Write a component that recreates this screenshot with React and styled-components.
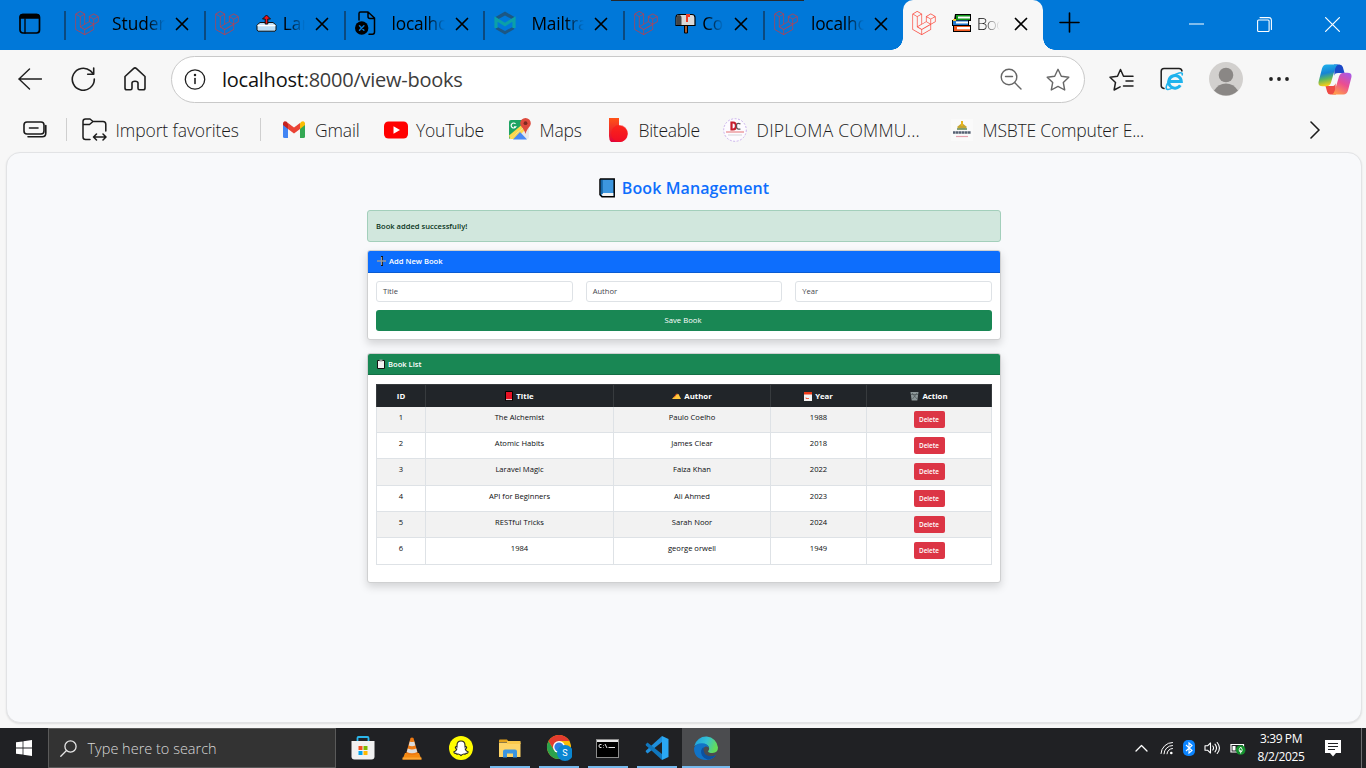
import React from "react";
import styled, { createGlobalStyle, css } from "styled-components";
import { SiLaravel } from "react-icons/si";

const Global = createGlobalStyle`
  * { box-sizing: border-box; }
  body { margin: 0; background: #f7f7f7; font-family: "Open Sans", "Noto Sans", sans-serif; overflow: hidden; }
  svg { display: block; flex: none; }
`;

const Screen = styled.div`
  width: 1366px;
  height: 768px;
  display: flex;
  flex-direction: column;
  background: #f7f7f7;
`;

/* ---------- Tab strip ---------- */
const TabStrip = styled.header`
  position: relative;
  height: 50px;
  flex: none;
  display: flex;
  background: #0078d9;
`;
const DragHint = styled.div`
  position: absolute;
  top: 0;
  left: 611px;
  width: 193px;
  height: 1px;
  background: #26282c;
`;
const Workspace = styled.div`
  width: 64px;
  padding: 13px 0 0 19px;
`;
const Tab = styled.div`
  position: relative;
  flex: none;
  width: 139.8px;
  height: 50px;
  display: flex;
  align-items: flex-start;
  padding-top: 11px;
  ${(p) =>
    p.$active
      ? css`
          background: #f7f7f7;
          border-radius: 10px 10px 0 0;
          &::before,
          &::after {
            content: "";
            position: absolute;
            bottom: 0;
            width: 12px;
            height: 12px;
          }
          &::before {
            left: -12px;
            background: radial-gradient(circle at 0 0, transparent 11.5px, #f7f7f7 12px);
          }
          &::after {
            right: -12px;
            background: radial-gradient(circle at 100% 0, transparent 11.5px, #f7f7f7 12px);
          }
        `
      : ""}
`;
const TabRule = styled.span`
  width: 2px;
  height: 29px;
  background: ${(p) => (p.$hidden ? "transparent" : "#0b4a80")};
`;
const Favicon = styled.span`
  width: 24px;
  height: 24px;
  margin-left: ${(p) => (p.$active ? 7 : 9)}px;
  color: ${(p) => (p.$active ? "#fb5348" : "#b8414f")};
`;
const TabTitle = styled.span`
  display: flex;
  align-items: center;
  width: 53px;
  height: 24px;
  margin-left: ${(p) => (p.$active ? 11 : 13)}px;
  padding-left: ${(p) => p.$indent || 0}px;
  overflow: hidden;
  white-space: nowrap;
  font-size: 17.3px;
  font-weight: ${(p) => (p.$active ? 300 : 400)};
  letter-spacing: ${(p) => p.$ls || 0}px;
  color: #000;
  mask-image: linear-gradient(90deg, #000 65%, transparent 100%);
  svg { margin-right: 6px; }
`;
const TabClose = styled.span`
  margin: 6px 0 0 ${(p) => (p.$active ? 14 : 10)}px;
`;
const NewTab = styled.div`
  margin: 12px 0 0 16px;
`;
const WindowButtons = styled.div`
  display: flex;
  align-items: center;
  gap: 53px;
  margin-left: auto;
  padding: 0 26px 2px 0;
`;

/* ---------- Toolbar ---------- */
const Toolbar = styled.div`
  height: 58px;
  flex: none;
  display: flex;
  align-items: center;
  padding-left: 18px;
  color: #1f1f1f;
`;
const NavButtons = styled.div`
  width: 153px;
  display: flex;
  gap: 28.5px;
  align-items: center;
`;
const AddressBar = styled.div`
  width: 914px;
  height: 47px;
  display: flex;
  align-items: center;
  padding: 0 14px 0 12px;
  border: 1px solid #c9c9c9;
  border-radius: 24px;
  background: #fff;
  svg + svg { margin-left: 24px; }
`;
const Url = styled.span`
  flex: 1;
  padding-left: 16px;
  font-size: 20px;
  letter-spacing: -0.24px;
  color: #3c3c3c;
  b { font-weight: 400; color: #111; }
`;
const ToolButtons = styled.div`
  display: flex;
  align-items: center;
  flex: 1;
  padding-left: 24px;
`;
const ToolSlot = styled.span`
  width: ${(p) => p.$w}px;
`;

/* ---------- Favourites bar ---------- */
const Favourites = styled.nav`
  height: 44px;
  flex: none;
  display: flex;
  align-items: center;
  padding: 0 0 1px 23px;
  color: #1b1b1b;
`;
const FavRule = styled.span`
  width: 1px;
  height: 23px;
  margin: 0 ${(p) => p.$after}px 0 ${(p) => p.$before}px;
  background: #cfcfcf;
`;
const Fav = styled.div`
  width: ${(p) => p.$w}px;
  display: flex;
  align-items: center;
  white-space: nowrap;
  font-size: 17.5px;
  font-weight: 300;
  letter-spacing: ${(p) => p.$ls || 0}px;
`;
const FavIcon = styled.span`
  width: ${(p) => p.$w || 32}px;
  flex: none;
`;

/* ---------- Web page ---------- */
const Viewport = styled.main`
  width: 1356px;
  height: 571px;
  flex: none;
  margin: 0 0 5px 6px;
  display: flex;
  flex-direction: column;
  align-items: center;
  padding-top: 24px;
  border: 1px solid #e2e3e5;
  border-radius: 14px;
  background: #f8f9fb;
  box-shadow: 0 1px 2px rgba(0, 0, 0, 0.1);
  font-size: 8px;
`;
const Heading = styled.h2`
  height: 22px;
  margin: 0 0 11px;
  display: flex;
  align-items: center;
  gap: 7px;
  font-size: 16px;
  line-height: 22px;
  font-weight: 600;
  letter-spacing: 0.09px;
  color: #0d6efd;
`;
const Column = styled.div`
  width: 634px;
  display: flex;
  flex-direction: column;
`;
const Alert = styled.div`
  height: 32px;
  padding-left: 8px;
  display: flex;
  align-items: center;
  border: 1px solid #a3cfbb;
  border-radius: 3px;
  background: #d1e7dd;
  color: #0a3622;
  font-weight: 600;
  font-size: 7.6px;
`;
const Card = styled.section`
  height: ${(p) => p.$h}px;
  margin-top: ${(p) => p.$mt}px;
  border: 1px solid #cfd0d1;
  border-radius: 3px;
  background: #fff;
  box-shadow: 0 4px 8px rgba(0, 0, 0, 0.15);
`;
const CardHeader = styled.div`
  height: ${(p) => p.$h}px;
  padding: 0 0 1px 9px;
  display: flex;
  align-items: center;
  gap: 3px;
  border-radius: 2px 2px 0 0;
  border-bottom: 1px solid rgba(0, 0, 0, 0.17);
  background: ${(p) => p.$bg};
  color: #fff;
  font-weight: 600;
  font-size: 7.6px;
`;
const Form = styled.div`
  padding: 8px;
  display: grid;
  grid-template-columns: repeat(3, 1fr);
  gap: 8px 13px;
`;
const Input = styled.div`
  height: 21px;
  padding: 0 0 1px 6px;
  display: flex;
  align-items: center;
  border: 1px solid #dee2e6;
  border-radius: 3px;
  color: #3f454b;
  font-size: 7.6px;
`;
const SaveButton = styled.div`
  grid-column: 1 / -1;
  height: 21px;
  padding: 0 2px 1px 0;
  display: flex;
  align-items: center;
  justify-content: center;
  border-radius: 3px;
  background: #198754;
  color: #fff;
  font-size: 7.7px;
`;
const Table = styled.div`
  margin: 9px 8px 0;
`;
const Row = styled.div`
  display: grid;
  grid-template-columns: 49px 188px 157px 96px 125px;
  height: ${(p) => p.$h}px;
  border-left: 1px solid #dee2e6;
  background: ${(p) => (p.$striped ? "#f2f2f2" : "#fff")};
`;
const HeadRow = styled(Row)`
  background: #212529;
  border: 1px solid #373b3e;
  border-width: 1px 0 0 1px;
`;
const HeadCell = styled.div`
  display: flex;
  align-items: center;
  justify-content: center;
  gap: 3px;
  border-right: 1px solid #373b3e;
  color: #fff;
  font-weight: 700;
  font-size: 7.8px;
`;
const Cell = styled.div`
  padding-top: 5px;
  border: solid #dee2e6;
  border-width: 0 1px 1px 0;
  text-align: center;
  line-height: 11px;
  font-size: 7.6px;
  color: #0b0d0f;
`;
const DeleteButton = styled.div`
  width: 31px;
  height: 17px;
  margin: -1px auto 0;
  border-radius: 2px;
  background: #dc3545;
  color: #fff;
  font-size: 6.4px;
  font-weight: 600;
  line-height: 17px;
`;

/* ---------- Taskbar ---------- */
const Taskbar = styled.footer`
  height: 40px;
  flex: none;
  display: flex;
  background: #202124;
  color: #fff;
`;
const Start = styled.div`
  width: 48px;
  padding: 12px 0 0 16px;
`;
const Search = styled.div`
  width: 288px;
  display: flex;
  align-items: center;
  gap: 11px;
  padding-left: 10.5px;
  border: 1px solid #5a5a5a;
  background: #333;
  color: #d8d8d8;
  font-size: 14.5px;
  font-weight: 300;
`;
const Apps = styled.div`
  display: flex;
  padding-left: 2px;
`;
const AppSlot = styled.div`
  width: ${(p) => (p.$active ? 48 : 49)}px;
  margin-left: ${(p) => (p.$active ? 1 : 0)}px;
  display: flex;
  align-items: center;
  justify-content: center;
  background: ${(p) =>
    p.$active
      ? "linear-gradient(#76b9ed, #76b9ed) center bottom / 100% 2px no-repeat #4b4c4f"
      : p.$running
        ? "linear-gradient(#76b9ed, #76b9ed) center bottom / 40px 2px no-repeat"
        : "none"};
`;
const Tray = styled.div`
  display: flex;
  align-items: center;
  margin-left: auto;
`;
const TraySlot = styled.span`
  width: ${(p) => p.$w}px;
`;
const Clock = styled.div`
  width: 70px;
  font-size: 12px;
  line-height: 18px;
  text-align: center;
  letter-spacing: -0.4px;
`;
const DesktopEdge = styled.span`
  width: 5px;
  height: 40px;
  border-left: 1px solid #6d6d70;
`;

/* ---------- Icons ---------- */
const line = (w = 1.5) => ({
  fill: "none",
  stroke: "currentColor",
  strokeWidth: w,
  strokeLinecap: "round",
  strokeLinejoin: "round",
});

const WorkspaceIcon = () => (
  <svg width="22" height="22" viewBox="0 0 22 22" {...line(1.7)}>
    <rect x="1" y="1.5" width="19.5" height="18.5" rx="3" />
    <path d="M1.4 5V3.5a2 2 0 0 1 2-2h14.5a2 2 0 0 1 2 2V5z" fill="#000" />
    <path d="M6 6v14" strokeWidth="1.3" />
  </svg>
);
const CloseIcon = () => (
  <svg width="14" height="14" viewBox="0 0 14 14" {...line(1.7)} color="#000">
    <path d="M1.5 1.5l11 11M12.5 1.5l-11 11" />
  </svg>
);
const BrokenPage = () => (
  <svg width="24" height="24" viewBox="0 0 24 24" color="#000" {...line(1.5)}>
    <path d="M4 9V2.500Q4 1 5.500 1H13l6.500 6v14Q19.500 23.200 17.500 23.200h-3.500M13 1v4.500Q13 7.500 15 7.500h4.500" />
    <circle cx="6.700" cy="17" r="6.700" fill="#000" stroke="none" />
    <path d="M4.500 14.800l4.400 4.400M8.900 14.800l-4.400 4.400" stroke="#0078d9" />
  </svg>
);
const Mailtrap = () => (
  <svg width="22" height="24" viewBox="0 0 22 24" fill="none">
    <path d="M1.500 6L11 .500 20.500 6 18.500 8.500 11 4.500 3.500 8.500z" fill="#1c5784" />
    <path d="M1.500 18L11 23.500 20.500 18 18.500 16 11 20 3.500 16z" fill="#1c5784" />
    <path d="M2 17V8L11 13.500 20 8v9" stroke="#0ba0a8" strokeWidth="3.200" />
  </svg>
);
const Outbox = () => (
  <svg width="21" height="18" viewBox="0 0 21 18">
    <path d="M1 11l3-2.500h13l3 2.500v5l-1 1.200H2L1 16z" fill="#b9dcf5" stroke="#111" strokeWidth="1" />
    <path d="M1.500 11.500h18" stroke="#fff" strokeWidth="1.500" />
    <path d="M10.500 1L6.500 5h2.700v5h2.600V5h2.700z" fill="#f0121c" stroke="#111" strokeWidth="1" />
  </svg>
);
const Mailbox = () => (
  <svg width="21" height="21" viewBox="0 0 21 21">
    <path d="M9.500 12h3v8h-3z" fill="#a75a2a" stroke="#000" />
    <path d="M1 12.500V4.500Q1 1.500 4 1.500h13q3 0 3 3v8z" fill="#d9d9d9" stroke="#000" strokeWidth="1.200" />
    <path d="M1.500 12V5q0-3 2.500-3t2.500 3v7z" fill="#444" />
    <path d="M11 1h4v3h-2v5h-2z" fill="#ef3c25" />
  </svg>
);
const Books = () => (
  <svg width="19" height="18" viewBox="0 0 19 18">
    <path d="M3 0h16v7h-2v4h2v7H1v-6H0V6h2z" fill="#000" />
    <path d="M4 1h14v5H4z" fill="#12961a" /><path d="M6 2.500h12v2H6z" fill="#fff" />
    <path d="M1 6.500h15v4.500H1z" fill="#2379cf" /><path d="M4 7.500h12v2H4z" fill="#fff" />
    <path d="M1 5h3v2H1z" fill="#f4c430" />
    <path d="M2 12h16v5H2z" fill="#f05a22" /><path d="M5 13h13v2.300H5z" fill="#fff" />
  </svg>
);
const BlueBook = () => (
  <svg width="16" height="20" viewBox="0 0 16 20">
    <path d="M1.500 1h13.700v17.800H3L1 16.800V1.500z" fill="#3d96de" stroke="#000" strokeWidth="1.500" />
    <path d="M2.500 15h11.800v3H3.500z" fill="#f2f2f2" /><path d="M1.800 2h2v14h-2z" fill="#1667a8" />
  </svg>
);
const RedBook = () => (
  <svg width="8" height="10" viewBox="0 0 8 10">
    <path d="M.5.500h7v9h-7z" fill="#e81224" stroke="#000" /><path d="M1 8.200h6v.9H1z" fill="#eee" />
  </svg>
);
const Plus = () => (
  <svg width="9" height="10" viewBox="0 0 9 10">
    <path d="M5 0v10" stroke="#15171a" strokeWidth="2" />
    <path d="M0 5h9M4.500 1v8" stroke="#9b9b9b" strokeWidth="1.300" />
  </svg>
);
const Clipboard = () => (
  <svg width="8" height="10" viewBox="0 0 8 10">
    <path d="M.5 1.500h7v8h-7z" fill="#f1f1f1" stroke="#111" /><path d="M2.500.500h3v2h-3z" fill="#999" />
  </svg>
);
const Writing = () => (
  <svg width="9" height="8" viewBox="0 0 9 8">
    <path d="M0 7l4-4.500 2.500-.5L9 7z" fill="#ffc83d" /><path d="M2 5.500l3-4" stroke="#e04a1f" strokeWidth="1" />
  </svg>
);
const Calendar = () => (
  <svg width="8" height="9" viewBox="0 0 8 9">
    <path d="M0 0h8v9H0z" fill="#f3f3f3" /><path d="M0 0h8v2.500H0z" fill="#f03a17" /><path d="M2 5.500v1h3" stroke="#f03a17" fill="none" strokeWidth=".8" />
  </svg>
);
const Bin = () => (
  <svg width="9" height="10" viewBox="0 0 9 10">
    <path d="M.5 1h8l-1.200 8.500H1.700z" fill="#8b9698" /><path d="M2 2l5 6M7 2L2.500 8M1 3.500h7" stroke="#4c5558" strokeWidth=".7" />
  </svg>
);

const Gmail = () => (
  <svg width="22" height="17" viewBox="0 0 22 17">
    <path d="M0 2v13.500Q0 17 1.500 17H5V7z" fill="#4285f4" />
    <path d="M22 2v13.500q0 1.500-1.500 1.500H17V7z" fill="#34a853" />
    <path d="M17 2.200V8l5-4V2.500C22 .3 20-.6 18.300.800z" fill="#fbbc04" />
    <path d="M0 2.500V4l5 4V2.200L3.700.800C2-.6 0 .3 0 2.500z" fill="#c5221f" />
    <path d="M5 2v6l6 4.500L17 8V2l-6 4.500z" fill="#ea4335" />
  </svg>
);
const YouTube = () => (
  <svg width="24" height="18" viewBox="0 0 24 18">
    <rect y=".5" width="24" height="17" rx="4.500" fill="#f00" /><path d="M9.500 5.300l6.500 3.700-6.500 3.700z" fill="#fff" />
  </svg>
);
const Maps = () => (
  <svg width="23" height="23" viewBox="0 0 23 23">
    <rect x="1" y="2" width="20" height="19" rx="2" fill="#e8e8e8" />
    <path d="M3 2h12v7L1 21V4q0-2 2-2z" fill="#1fa463" />
    <path d="M2 21L19 7l2 1L8 21z" fill="#ffd84b" />
    <path d="M5 21.500l7-7.500 7 7.500z" fill="#4a89f3" />
    <path d="M1 17.500L13 7.500l2 2L2 21z" fill="#ffd84b" />
    <path d="M7.500 5.800a2.500 2.500 0 1 0 .3 3H6" fill="none" stroke="#fff" strokeWidth="1.200" />
    <path d="M17.500 0a5.300 5.300 0 0 1 5.300 5.300c0 3.700-4 5-5.300 10.700-1.300-5.700-5.300-7-5.300-10.700A5.300 5.300 0 0 1 17.500 0z" fill="#dd4b3e" />
    <circle cx="17.500" cy="5.200" r="1.900" fill="#7d2a22" />
  </svg>
);
const Biteable = () => (
  <svg width="20" height="24" viewBox="0 0 20 24">
    <defs><linearGradient id="bite" x2="0" y2="1"><stop stopColor="#ff5317" /><stop offset="1" stopColor="#e0043c" /></linearGradient></defs>
    <path d="M0 0h10v7.500a8.300 8.300 0 1 1-1 16.500H2Q0 22 0 18z" fill="url(#bite)" />
    <circle cx="10.500" cy="15.500" r="8.400" fill="#ff1414" opacity=".55" />
  </svg>
);
const Diploma = () => (
  <svg width="24" height="24" viewBox="0 0 24 24">
    <circle cx="12" cy="12" r="11.300" fill="#fdfbff" stroke="#cbb3ec" strokeDasharray="2 1.500" />
    <path d="M8.500 4.500H10q3 0 3 3.500t-3 3.500H8.500z" fill="none" stroke="#c81e2c" strokeWidth="2.200" />
    <path d="M17.500 6q-4-2-4 2t4 3" fill="none" stroke="#555" strokeWidth="1.200" />
    <path d="M3 14h18" stroke="#eb9ea2" strokeWidth="1.500" /><path d="M5 17h14" stroke="#d5d5da" />
  </svg>
);
const Msbte = () => (
  <svg width="22" height="22" viewBox="0 0 22 22">
    <path d="M0 0h22v22H0z" fill="#fafafa" />
    <path d="M6 8l5-4 5 4-2 2H8z" fill="#c5a632" /><path d="M11 2v5" stroke="#e8b51c" strokeWidth="2" />
    <path d="M6 10h10" stroke="#7a9a70" strokeWidth="1.800" />
    <path d="M2 13.500h18" stroke="#566173" strokeWidth="2.600" strokeDasharray="2.500 .4" />
    <path d="M5 17.500h12" stroke="#e5a0ae" strokeWidth="1.200" />
  </svg>
);
const star = "M12 1.300l3.300 6.900 7.500 1-5.500 5.300 1.400 7.500L12 18.400 5.300 22l1.400-7.500L1.200 9.200l7.500-1z";

const Tabs = [
  { icon: "laravel", title: "Studer", ls: 0 },
  { icon: "laravel", title: "Lar", glyph: <Outbox />, ls: 0 },
  { icon: <BrokenPage />, title: "localho", ls: -0.2 },
  { icon: <Mailtrap />, title: "Mailtra", ls: -0.1 },
  { icon: "laravel", title: "Co", glyph: <Mailbox />, ls: -0.3 },
  { icon: "laravel", title: "localho", ls: -0.2 },
  { icon: "laravel", title: "Boo", glyph: <Books />, active: true, ls: -0.9 },
];

const books = [
  ["1", "The Alchemist", "Paulo Coelho", "1988", 26],
  ["2", "Atomic Habits", "James Clear", "2018", 26],
  ["3", "Laravel Magic", "Faiza Khan", "2022", 27],
  ["4", "API for Beginners", "Ali Ahmed", "2023", 26],
  ["5", "RESTful Tricks", "Sarah Noor", "2024", 26],
  ["6", "1984", "george orwell", "1949", 27],
];

function BrowserTabs() {
  return (
    <TabStrip>
      <Workspace><WorkspaceIcon /></Workspace>
      {Tabs.map((t, i) => (
        <Tab key={i} $active={t.active}>
          <TabRule $hidden={t.active} />
          <Favicon $active={t.active}>{t.icon === "laravel" ? <SiLaravel size={24} /> : t.icon}</Favicon>
          <TabTitle $active={t.active} $ls={t.ls} $indent={t.glyph ? (t.active ? 5 : 4) : 0}>{t.glyph}{t.title}</TabTitle>
          <TabClose $active={t.active}><CloseIcon /></TabClose>
        </Tab>
      ))}
      <NewTab>
        <svg width="21" height="21" viewBox="0 0 21 21" {...line(1.6)} color="#000"><path d="M10.500 1v19M1 10.500h19" /></svg>
      </NewTab>
      <WindowButtons>
        <svg width="15" height="15" viewBox="0 0 15 15" {...line(1.1)} color="#fff"><path d="M0 7h15" /></svg>
        <svg width="15" height="15" viewBox="0 0 15 15" {...line(1.1)} color="#fff"><rect x=".6" y="3" width="11.500" height="11.500" rx="1" /><path d="M3 .600h9q2.400 0 2.400 2.400v9.500" /></svg>
        <svg width="15" height="15" viewBox="0 0 15 15" {...line(1.2)} color="#fff"><path d="M.6.600l13.800 13.800M14.400.600L.6 14.400" /></svg>
      </WindowButtons>
      <DragHint />
    </TabStrip>
  );
}

function BrowserToolbar() {
  return (
    <Toolbar>
      <NavButtons>
        <svg width="24" height="24" viewBox="0 0 24 24" {...line(1.4)}><path d="M23.500 12H.8M11.500 2L1 12l10.500 10" /></svg>
        <svg width="25" height="24" viewBox="0 0 25 24" {...line(1.6)}><path d="M23.300 12A11 11 0 1 1 19.500 3.900L22.500 7M22.700 1v6.200h-6" /></svg>
        <svg width="22" height="24" viewBox="0 0 22 24" {...line(1.6)}><path d="M1 9.500L9.500 1.600q1.500-1.300 3 0L21 9.500V21q0 1.800-1.800 1.800H15.500q-1.500 0-1.500-1.500V16q0-1.800-3-1.800T8 16v5.300q0 1.500-1.500 1.500H2.800Q1 22.800 1 21z" /></svg>
      </NavButtons>
      <AddressBar>
        <svg width="22" height="22" viewBox="0 0 22 22" {...line(1.3)}><circle cx="11" cy="11.500" r="9.700" /><path d="M11 10.500v5" strokeWidth="1.600" /><circle cx="11" cy="7" r=".6" fill="currentColor" /></svg>
        <Url><b>localhost</b>:8000/view-books</Url>
        <svg width="22" height="22" viewBox="0 0 22 22" {...line(1.4)} color="#666"><circle cx="9" cy="9" r="7.800" /><path d="M14.600 14.600L21 21M5.500 8.500h7" /></svg>
        <svg width="24" height="23" viewBox="0 0 24 23" {...line(1.4)} color="#666"><path d={star} /></svg>
      </AddressBar>
      <ToolButtons>
        <ToolSlot $w={51}><svg width="25" height="23" viewBox="0 0 25 23" {...line(1.5)}><path d="M14.500 8.200L11.500 1.500 8.500 8.200 1 9.200l5.500 5.300-1.400 7.500 6-3.200M14.500 8.200h9.500M17 13h7M14.500 18h9.500" /></svg></ToolSlot>
        <ToolSlot $w={49}><svg width="24" height="24" viewBox="0 0 24 24"><path d="M4 21.500Q1.200 21 1.200 18.500V4.500Q1.200 1.500 4 1.500h15q2.500 0 3 2.500" {...line(1.5)} /><path d="M9 14.500h12.300a6.300 6.300 0 1 0-1 3.800" fill="none" stroke="#1fb3ed" strokeWidth="3" /><path d="M8 15q3-7 11-9 4.500-1 3 2.500M8 15.500q-3.500 6.500-.5 7 2.500.300 6-2.300" fill="none" stroke="#1fb3ed" strokeWidth="1.600" /></svg></ToolSlot>
        <ToolSlot $w={60}><svg width="34" height="34" viewBox="0 0 34 34"><circle cx="17" cy="17" r="17" fill="#d2d0ce" /><circle cx="17" cy="13" r="7.300" fill="#8a8785" /><path d="M5 28.500Q9.500 21.500 17 21.500T29 28.500a17 17 0 0 1-24 0z" fill="#8a8785" /></svg></ToolSlot>
        <ToolSlot $w={49}><svg width="20" height="6" viewBox="0 0 20 6" fill="#222"><circle cx="2" cy="3" r="1.900" /><circle cx="10" cy="3" r="1.900" /><circle cx="18" cy="3" r="1.900" /></svg></ToolSlot>
        <svg width="34" height="31" viewBox="0 0 34 31">
          <defs>
            <linearGradient id="cp1" x2=".2" y2="1"><stop stopColor="#22b8ee" /><stop offset=".45" stopColor="#1684d5" /><stop offset=".7" stopColor="#5bb661" /><stop offset="1" stopColor="#f3cd19" /></linearGradient>
            <linearGradient id="cp2" x1=".8" x2=".3" y2="1"><stop stopColor="#a959e5" /><stop offset=".5" stopColor="#eb4d91" /><stop offset="1" stopColor="#ff9a4c" /></linearGradient>
          </defs>
          <path d="M16 .500h5.500q2.500 0 3.300 2.500L26.500 9h-6q-3 0-4 3z" fill="#1c49c7" />
          <path d="M18 30.500h-5.500q-2.500 0-3.300-2.500L7.500 22h6q3 0 4-3z" fill="#ee4b45" />
          <path d="M8.500.500H20q-2 1-3 4.500L13 18.500q-1.200 3.800-4.500 3.800H4.500q-5 0-3.800-5L4 4.500Q5.200.500 8.500.500z" fill="url(#cp1)" />
          <path d="M25.500 30.500H14q2-1 3-4.500l4-13.500q1.200-3.800 4.500-3.800h4q5 0 3.800 5L30 26.500q-1.200 4-4.500 4z" fill="url(#cp2)" />
          <path d="M17.500 9.500h4.500q-2 1-2.500 3.500l-2 6.500q-.800 2.500-3 2.500h-3q2-1 2.500-3l2-6.500q.5-2 1.500-3z" fill="#f7f7f7" />
        </svg>
      </ToolButtons>
    </Toolbar>
  );
}

function FavouritesBar() {
  return (
    <Favourites>
      <svg width="24" height="17" viewBox="0 0 24 17" {...line(1.6)}><rect x="1" y="1" width="20" height="12" rx="3" /><path d="M6.500 7h8.500M22.800 4.500v7.500q0 3.700-3.500 3.700H5" /></svg>
      <FavRule $before={19} $after={15} />
      <Fav $w={163} $ls={-0.1}>
        <FavIcon $w={33.5}>
          <svg width="25" height="24" viewBox="0 0 25 24" {...line(1.5)}><path d="M8 21.500H3.500Q1 21.500 1 19V3.500Q1 1 3.500 1H8l3 2.500h10q2.800 0 2.800 2.800V13M1 6.500h6.500l3.500-3M12 19h11.500M14.500 16l-3 3 3 3M21 16l3 3-3 3" /></svg>
        </FavIcon>
        Import favorites
      </Fav>
      <FavRule $before={15} $after={22} />
      <Fav $w={101} $ls={-0.15}><FavIcon><Gmail /></FavIcon>Gmail</Fav>
      <Fav $w={124} $ls={-0.2}><FavIcon><YouTube /></FavIcon>YouTube</Fav>
      <Fav $w={101} $ls={-0.15}><FavIcon $w={31.5}><Maps /></FavIcon>Maps</Fav>
      <Fav $w={114} $ls={-0.3}><FavIcon $w={29.5}><Biteable /></FavIcon>Biteable</Fav>
      <Fav $w={228} $ls={0.28}><FavIcon $w={33.5}><Diploma /></FavIcon>DIPLOMA COMMU...</Fav>
      <Fav $w={359} $ls={-0.2}><FavIcon $w={31.5}><Msbte /></FavIcon>MSBTE Computer E...</Fav>
      <svg width="10" height="18" viewBox="0 0 10 18" {...line(1.6)}><path d="M1 1l8 8-8 8" /></svg>
    </Favourites>
  );
}

function BookPage() {
  return (
    <Viewport>
      <Heading><BlueBook />Book Management</Heading>
      <Column>
        <Alert>Book added successfully!</Alert>
        <Card $h={90} $mt={8}>
          <CardHeader $h={22} $bg="#0d6efd"><Plus />Add New Book</CardHeader>
          <Form>
            <Input>Title</Input>
            <Input>Author</Input>
            <Input>Year</Input>
            <SaveButton>Save Book</SaveButton>
          </Form>
        </Card>
        <Card $h={230} $mt={13}>
          <CardHeader $h={21} $bg="#198754"><Clipboard />Book List</CardHeader>
          <Table>
            <HeadRow $h={23}>
              <HeadCell>ID</HeadCell>
              <HeadCell><RedBook />Title</HeadCell>
              <HeadCell><Writing />Author</HeadCell>
              <HeadCell><Calendar />Year</HeadCell>
              <HeadCell><Bin />Action</HeadCell>
            </HeadRow>
            {books.map(([id, title, author, year, h], i) => (
              <Row key={id} $h={h} $striped={i % 2 === 0}>
                <Cell>{id}</Cell>
                <Cell>{title}</Cell>
                <Cell>{author}</Cell>
                <Cell>{year}</Cell>
                <Cell><DeleteButton>Delete</DeleteButton></Cell>
              </Row>
            ))}
          </Table>
        </Card>
      </Column>
    </Viewport>
  );
}

function WindowsTaskbar() {
  return (
    <Taskbar>
      <Start>
        <svg width="16" height="16" viewBox="0 0 16 16" fill="#fff"><path d="M0 2.300L6.600 1.400v6.200H0zM7.400 1.200L16 0v7.600H7.400zM0 8.400h6.600v6.200L0 13.700zM7.400 8.400H16V16l-8.600-1.200z" /></svg>
      </Start>
      <Search>
        <svg width="17" height="17" viewBox="0 0 17 17" {...line(1.3)} color="#e6e6e6"><circle cx="10.500" cy="6.500" r="5.600" /><path d="M6.500 10.500L.8 16.200" /></svg>
        Type here to search
      </Search>
      <Apps>
        <AppSlot>
          <svg width="24" height="24" viewBox="0 0 24 24"><path d="M6.500 6V2q0-1 1-1h9q1 0 1 1v4" fill="none" stroke="#2bb6ea" strokeWidth="1.800" /><path d="M.5 5h23v15.500q0 3-3 3h-17q-3 0-3-3z" fill="#f1f1f1" /><path d="M7.500 10h4v4h-4z" fill="#f25022" /><path d="M12.500 10h4v4h-4z" fill="#7fba00" /><path d="M7.500 15h4v4h-4z" fill="#00a4ef" /><path d="M12.500 15h4v4h-4z" fill="#ffb900" /></svg>
        </AppSlot>
        <AppSlot>
          <svg width="20" height="23" viewBox="0 0 20 23"><path d="M3 16h14l2.500 6.500H.5z" fill="#f58a12" /><path d="M8.500 1q1.500-1 3 0L15.800 16.500q-5.800 3-11.600 0z" fill="#ee7a13" /><path d="M7.800 4.500q2.200 1 4.400 0l1.100 4q-3.300 1.500-6.600 0zM5.800 11.500q4.200 2 8.400 0l1.100 3.500q-5.300 2.500-10.600 0z" fill="#dcdcdc" /><path d="M.5 20.500h19v2H.5z" fill="#ffa733" /></svg>
        </AppSlot>
        <AppSlot>
          <svg width="24" height="24" viewBox="0 0 24 24"><circle cx="12" cy="12" r="12" fill="#fffc00" /><path d="M12 5q4 0 4 4.200v1.800q1.500-.5 1.700.500-.2 1-1.500 1.500.8 2.500 3 3-.2 1.500-2.200 1.400-.5 1-1.500.7-1.500-.4-3.500 1.400-2-1.800-3.500-1.400-1 .3-1.500-.7-2 .1-2.200-1.400 2.200-.5 3-3-1.300-.5-1.500-1.500.2-1 1.700-.5V9.200Q8 5 12 5z" fill="#fff" stroke="#222" strokeWidth="1.100" /></svg>
        </AppSlot>
        <AppSlot $running>
          <svg width="22" height="19" viewBox="0 0 22 19"><path d="M0 1.500Q0 .500 1 .500h7L10 3h-10z" fill="#e3a21a" /><path d="M0 3.500h21.500V18H0z" fill="#ffd567" /><path d="M8 2h13.500v3H8z" fill="#fbc94b" /><path d="M4 18.500v-6q0-2 2-2h10q2 0 2 2v6h-4v-4H8v4z" fill="#3c95df" /></svg>
        </AppSlot>
        <AppSlot $running>
          <svg width="26" height="26" viewBox="-1 0 26 26"><circle cx="12" cy="12" r="12" fill="#fbbc05" /><path d="M1.600 6A12 12 0 0 0 12 24l5-9-5-3-5 3z" fill="#2ba24c" /><path d="M1.600 6a12 12 0 0 1 20.800 0H12L7 15z" fill="#e33b2e" /><circle cx="12" cy="12" r="6" fill="#fff" /><circle cx="12" cy="12" r="4.600" fill="#2f7de1" /><circle cx="18" cy="18" r="8" fill="#0a86d1" /><text x="18" y="21.200" textAnchor="middle" fontSize="9" fontFamily="Roboto, sans-serif" fill="#fff">S</text></svg>
        </AppSlot>
        <AppSlot $running>
          <svg width="23" height="19" viewBox="0 0 23 19"><rect x=".5" y=".5" width="22" height="18" fill="#000" stroke="#8d8d8d" /><path d="M1 1h21v2H1z" fill="#e8e8e8" /><path d="M5.500 5.500H4q-1 0-1 1.500t1 1.500h1.500M7.500 6v.6M7.500 8v.5M9 5l2 4M12.500 8.500H19" fill="none" stroke="#e6e6e6" strokeWidth="1" /></svg>
        </AppSlot>
        <AppSlot $running>
          <svg width="25" height="24" viewBox="0 0 25 24"><path d="M18 0L2 14.500q-.8.800 0 1.600L3.500 17.500 18 6z" fill="#1f8fdc" /><path d="M18 24L2 9.500q-.8-.8 0-1.600L3.500 6.500 18 18z" fill="#1077be" /><path d="M18 0l6.500 3v18L18 24z" fill="#2aa7f2" /></svg>
        </AppSlot>
        <AppSlot $active>
          <svg width="24" height="24" viewBox="0 0 24 24">
            <defs><linearGradient id="edge" x2="1" y2=".3"><stop stopColor="#1b9de0" /><stop offset=".55" stopColor="#35c1d4" /><stop offset="1" stopColor="#63dc5a" /></linearGradient></defs>
            <path d="M.3 10A12 12 0 0 1 24 11.500q0 5-5.500 5.500-4.500 0-4.500-2 1.500-1 1-3.500Q14 8 9 8 3 8 .3 10z" fill="url(#edge)" />
            <path d="M0 12Q1.500 7.500 8 7.300q6 .2 7 4.700-1-2-3.500-1.500Q8 12 9 16q1.500 5 8 4.700 3-.2 5-1.700Q18.500 24 12 24 0 23.500 0 12z" fill="#1173c7" />
            <path d="M9.500 11Q5.500 14 8 19.500q2 3.500 6 4.300 5-.5 8-4.800-3 1.700-6.500 1.200Q9 19.500 9.500 11z" fill="#0c51a0" />
          </svg>
        </AppSlot>
      </Apps>
      <Tray>
        <TraySlot $w={25}><svg width="13" height="8" viewBox="0 0 13 8" {...line(1.3)}><path d="M1 7l5.500-5.500L12 7" /></svg></TraySlot>
        <TraySlot $w={23}><svg width="13" height="14" viewBox="0 0 13 14" {...line(1)}><path d="M1 12.500A11.500 11.500 0 0 1 12.500 1.500M4 12.800A8.500 8.500 0 0 1 12.500 4.500M7 12.800A5.500 5.500 0 0 1 12.500 7.500" /><circle cx="11.300" cy="12" r="1.300" fill="#fff" stroke="none" /></svg></TraySlot>
        <TraySlot $w={21}><svg width="12" height="16" viewBox="0 0 12 16"><rect width="12" height="16" rx="5" fill="#0a84ff" /><path d="M3 5l6 5.500L6 13V3l3 2.500L3 11" fill="none" stroke="#fff" strokeWidth="1.100" /></svg></TraySlot>
        <TraySlot $w={26}><svg width="17" height="14" viewBox="0 0 17 14" {...line(1.1)}><path d="M1 4.800h2.500L6.500 2v10L3.500 9.200H1zM8.800 5q1.500 2 0 4M11 3.200q3 3.800 0 7.600M13.200 1.500q4.500 5.500 0 11" /></svg></TraySlot>
        <TraySlot $w={16}><svg width="16" height="13" viewBox="0 0 16 13"><path d="M1 2.500h12.500v7.500H1z" fill="none" stroke="#fff" strokeWidth="1.200" /><path d="M2.500 4h3v4.500h-3z" fill="#fff" /><circle cx="10.700" cy="8" r="4.800" fill="#13912d" /><path d="M10.700 5q2.200 2.500 1.300 4.300-1.300 1.200-2.600 0Q8.500 7.500 10.700 5zM10.700 8v3.500" fill="none" stroke="#fff" strokeWidth=".9" /></svg></TraySlot>
        <Clock>3:39 PM<br />8/2/2025</Clock>
        <TraySlot $w={45}>
          <svg width="45" height="17" viewBox="-9 0 45 17"><path d="M0 0h16v13H11L8 16.500 5 13H0z" fill="#fff" /><path d="M3 3.500h10M3 6.500h10M3 9.500h7" stroke="#202124" strokeWidth="1.200" /></svg>
        </TraySlot>
        <DesktopEdge />
      </Tray>
    </Taskbar>
  );
}

export default function App() {
  return (
    <Screen>
      <Global />
      <BrowserTabs />
      <BrowserToolbar />
      <FavouritesBar />
      <BookPage />
      <WindowsTaskbar />
    </Screen>
  );
}
